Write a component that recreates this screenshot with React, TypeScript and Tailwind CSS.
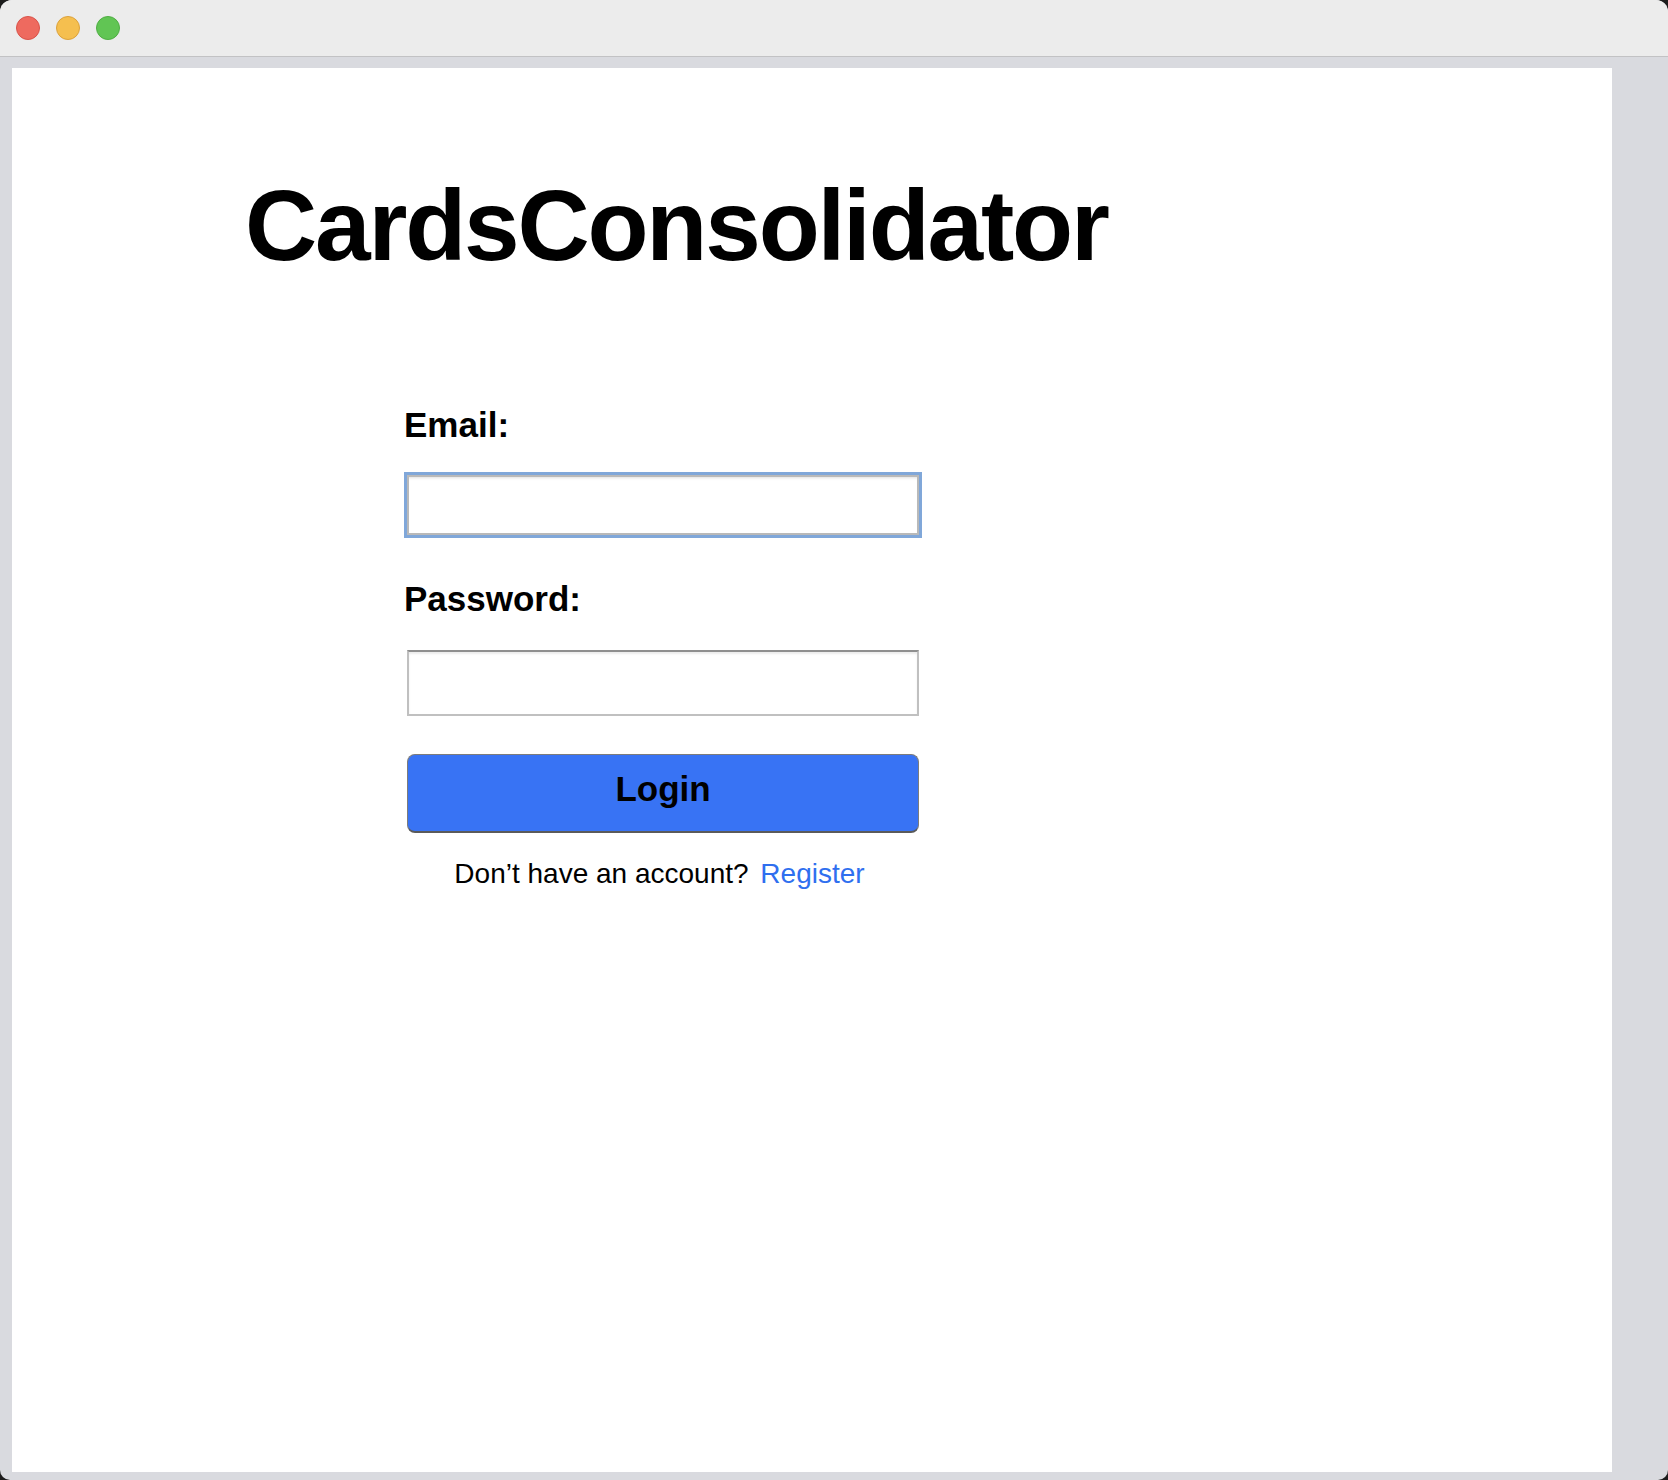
import React from "react";

function TrafficLights() {
  return (
    <div className="flex items-center gap-4 pl-4">
      <span className="w-6 h-6 rounded-full bg-[#ee6a5f] border border-[#d9534a]" />
      <span className="w-6 h-6 rounded-full bg-[#f5bf4f] border border-[#dca23c]" />
      <span className="w-6 h-6 rounded-full bg-[#61c554] border border-[#4fae43]" />
    </div>
  );
}

export default function App() {
  return (
    <div
      className="w-[1668px] h-[1480px] bg-[#1c1c1c]"
      style={{ fontFamily: '"Liberation Sans", Arial, Helvetica, sans-serif' }}
    >
      <div className="flex flex-col h-full rounded-t-[12px] rounded-b-[10px] overflow-hidden bg-[#d9dadf]">
        {/* title bar */}
        <div className="h-[57px] shrink-0 flex items-center bg-[#ececec] border-b border-[#c2c2c4]">
          <TrafficLights />
        </div>

        {/* browser viewport */}
        <div className="flex-1 flex pt-[11px] pl-[12px] pr-[56px] pb-[8px]">
          <div className="flex-1 bg-white text-black">
            <h1 className="ml-[233px] mt-[107px] text-[100px] leading-none font-bold tracking-[-2.2px]">
              CardsConsolidator
            </h1>

            <form
              className="ml-[392px] mt-[132px] w-[530px] flex flex-col"
              onSubmit={(e) => e.preventDefault()}
            >
              <label className="text-[35px] leading-none font-bold">Email:</label>
              <input
                type="email"
                className="mt-[30px] w-[518px] h-[66px] border-[3px] border-[#80a7d9] shadow-[inset_0_0_0_2px_#b9b9b9,inset_0_3px_3px_rgba(0,0,0,0.12)] bg-white outline-none"
              />

              <label className="mt-[43px] text-[35px] leading-none font-bold">Password:</label>
              <input
                type="password"
                className="mt-[34px] ml-[3px] w-[512px] h-[66px] border-2 border-[#c0c0c0] border-t-[#8f8f8f] shadow-[inset_0_2px_2px_rgba(0,0,0,0.08)] bg-white outline-none"
              />

              <button
                type="submit"
                className="mt-[38px] ml-[3px] w-[512px] h-[79px] pb-[7px] rounded-[8px] bg-[#3873f4] border border-[#7c7c7c] border-b-2 border-b-[#5a5a5a] text-[35px] font-bold text-black"
              >
                Login
              </button>

              <p className="mt-[27px] ml-[3px] w-[512px] pr-[7px] text-center text-[28px] leading-none">
                Don’t have an account?{" "}
                <a href="#" className="ml-[4px] text-[#2f6fef]">
                  Register
                </a>
              </p>
            </form>
          </div>
        </div>
      </div>
    </div>
  );
}
